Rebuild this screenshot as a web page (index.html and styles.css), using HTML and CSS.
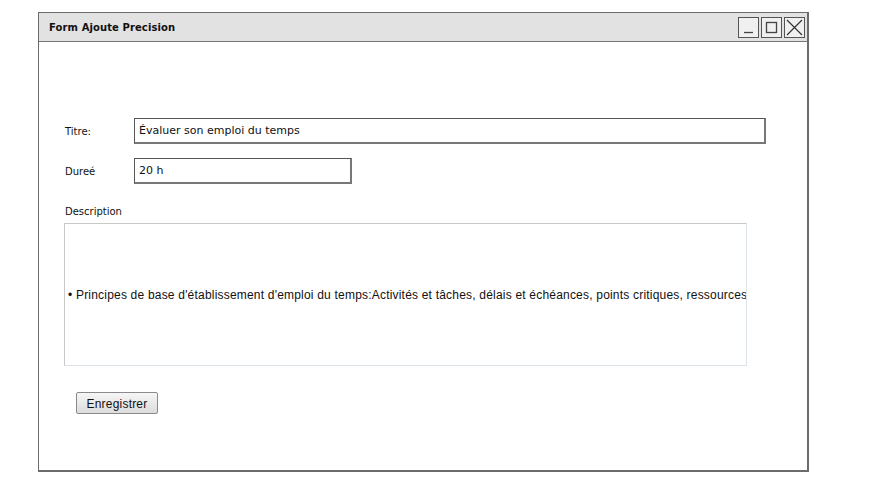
FILE: index.html
```html
<!DOCTYPE html>
<html lang="fr">
<head>
<meta charset="utf-8">
<title>Form Ajoute Precision</title>
<link rel="stylesheet" href="styles.css">
</head>
<body>
<div class="window">
  <div class="titlebar">
    <span class="title">Form Ajoute Precision</span>
    <div class="controls">
      <span class="ctl"><svg width="21" height="21" viewBox="0 0 21 21"><path d="M6 15.5H15" stroke="#444" stroke-width="1.3" fill="none"/></svg></span>
      <span class="ctl"><svg width="21" height="21" viewBox="0 0 21 21"><rect x="5.5" y="5.5" width="10" height="10" stroke="#444" stroke-width="1.3" fill="none"/></svg></span>
      <span class="ctl"><svg width="21" height="21" viewBox="0 0 21 21"><path d="M3 3L18 18M18 3L3 18" stroke="#333" stroke-width="1.2" fill="none"/></svg></span>
    </div>
  </div>
  <div class="content">
    <div class="row">
      <label class="label">Titre:</label>
      <div class="input wide">Évaluer son emploi du temps</div>
    </div>
    <div class="row">
      <label class="label">Dureé</label>
      <div class="input short">20 h</div>
    </div>
    <div class="desc-label">Description</div>
    <div class="textarea">
      <span class="desc-text">• Principes de base d'établissement d'emploi du temps:Activités et tâches, délais et échéances, points critiques, ressources</span>
    </div>
    <button class="btn">Enregistrer</button>
  </div>
</div>
</body>
</html>
```
FILE: styles.css
```css
html, body {
  margin: 0;
  padding: 0;
  background: #fff;
}
body {
  font-family: "DejaVu Sans", sans-serif;
  color: #111;
}
.window {
  margin: 12px 0 0 38px;
  width: 771px;
  height: 460px;
  box-sizing: border-box;
  border: 1px solid #6b6b6b;
  border-right-width: 2px;
  border-bottom-width: 2px;
  display: flex;
  flex-direction: column;
}
.titlebar {
  height: 28px;
  background: #e2e2e2;
  border-bottom: 1px solid #777;
  display: flex;
  align-items: center;
  justify-content: space-between;
  padding: 0 2px 0 10px;
}
.title {
  font-size: 10px;
  font-weight: bold;
  letter-spacing: 0.1px;
}
.controls {
  display: flex;
  gap: 2px;
  padding-top: 1px;
}
.ctl {
  width: 21px;
  height: 21px;
  box-sizing: border-box;
  border: 1px solid #555;
  background: #f0f0f0;
  display: flex;
}
.ctl svg { display: block; margin: -1px; }
.content {
  padding: 76px 0 0 26px;
  display: flex;
  flex-direction: column;
}
.row {
  display: flex;
  align-items: center;
  margin-bottom: 14px;
}
.label {
  width: 69px;
  font-size: 10px;
}
.input {
  height: 26px;
  box-sizing: border-box;
  border: 1px solid #555;
  border-right: 2px solid #777;
  border-bottom: 2px solid #777;
  font-size: 11px;
  padding: 5px 0 0 4px;
  background: #fff;
}
.wide { width: 632px; }
.short { width: 218px; }
.desc-label {
  font-size: 10px;
  margin-top: 8px;
  margin-bottom: 6px;
}
.textarea {
  margin-left: -1px;
  width: 683px;
  height: 143px;
  box-sizing: border-box;
  border: 1px solid #c8c8c8;
  border-bottom-color: #dde3ea;
  border-right-color: #dde3ea;
  display: flex;
  align-items: center;
  overflow: hidden;
  padding-left: 3px;
}
.desc-text {
  font-family: "Liberation Sans", Arial, sans-serif;
  font-size: 12px;
  letter-spacing: 0.2px;
  white-space: nowrap;
}
.btn {
  margin: 26px 0 0 11px;
  align-self: flex-start;
  width: 82px;
  height: 22px;
  font-family: "Liberation Sans", Arial, sans-serif;
  font-size: 12px;
  letter-spacing: 0.2px;
  color: #111;
  border: 1px solid #8a8a8a;
  border-radius: 2px;
  background: linear-gradient(#f6f6f6, #dcdcdc);
  padding: 1px 0 0;
}
```
